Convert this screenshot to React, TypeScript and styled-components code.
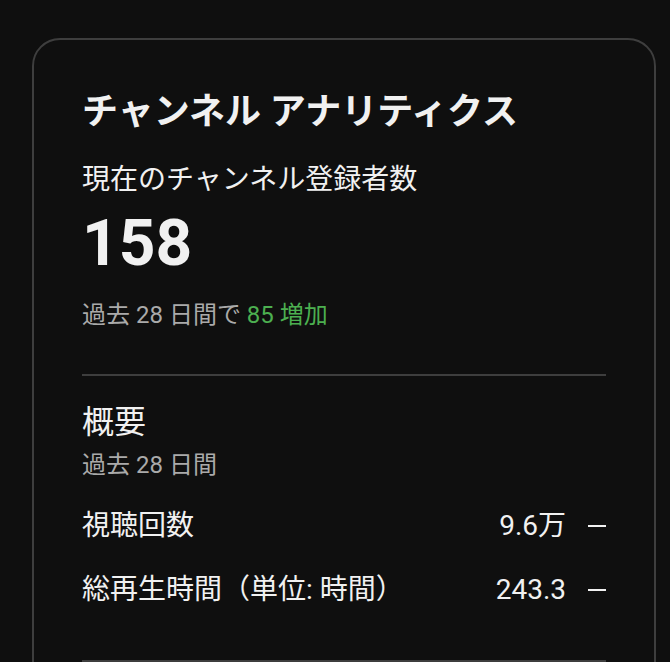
import styled, { createGlobalStyle } from "styled-components";

const GlobalStyle = createGlobalStyle`
  html, body {
    margin: 0;
    padding: 0;
    background: #0f0f0f;
  }
  body {
    font-family: Roboto, "Noto Sans CJK JP", sans-serif;
    color: #f1f1f1;
  }
`;

const Page = styled.div`
  height: 662px;
  overflow: hidden;
  padding: 38px 14px 0 32px;
  box-sizing: border-box;
`;

const Card = styled.section`
  border: 2px solid #3e3e3e;
  border-radius: 28px;
  padding: 50px 48px 0;
  height: 700px;
  box-sizing: border-box;
`;

const Title = styled.h1`
  margin: 0;
  font-size: 36px;
  line-height: 44px;
  font-weight: 700;
`;

const Label = styled.div`
  margin-top: 26px;
  font-size: 28px;
  line-height: 40px;
`;

const BigNumber = styled.div`
  margin-top: 8px;
  font-size: 64px;
  line-height: 72px;
  font-weight: 700;
`;

const Change = styled.div`
  margin-top: 19px;
  font-size: 24px;
  line-height: 32px;
  color: #aaaaaa;
`;

const Up = styled.span`
  color: #4caf50;
`;

const Divider = styled.hr<{ $top: number }>`
  margin: ${(p) => p.$top}px 0 0;
  border: 0;
  height: 2px;
  background: #3e3e3e;
`;

const SectionTitle = styled.h2`
  margin: 26px 0 0;
  font-size: 32px;
  line-height: 40px;
  font-weight: 400;
`;

const Period = styled.div`
  margin-top: 8px;
  font-size: 24px;
  line-height: 30px;
  color: #aaaaaa;
`;

const Rows = styled.div`
  margin-top: 26px;
  display: flex;
  flex-direction: column;
  gap: 24px;
`;

const Row = styled.div`
  display: flex;
  justify-content: space-between;
  align-items: center;
  font-size: 28px;
  line-height: 40px;
`;

const Value = styled.div`
  display: flex;
  align-items: center;
  gap: 22px;
`;

const Dash = styled.span`
  display: inline-block;
  width: 18px;
  height: 2px;
  background: #f1f1f1;
`;

const metrics = [
  { label: "視聴回数", value: "9.6万" },
  { label: "総再生時間（単位: 時間）", value: "243.3" },
];

export default function App() {
  return (
    <Page>
      <GlobalStyle />
      <Card>
        <Title>チャンネル アナリティクス</Title>
        <Label>現在のチャンネル登録者数</Label>
        <BigNumber>158</BigNumber>
        <Change>
          過去 28 日間で <Up>85 増加</Up>
        </Change>
        <Divider $top={43} />
        <SectionTitle>概要</SectionTitle>
        <Period>過去 28 日間</Period>
        <Rows>
          {metrics.map((m) => (
            <Row key={m.label}>
              <span>{m.label}</span>
              <Value>
                <span>{m.value}</span>
                <Dash aria-label="—" />
              </Value>
            </Row>
          ))}
        </Rows>
        <Divider $top={50} />
      </Card>
    </Page>
  );
}
